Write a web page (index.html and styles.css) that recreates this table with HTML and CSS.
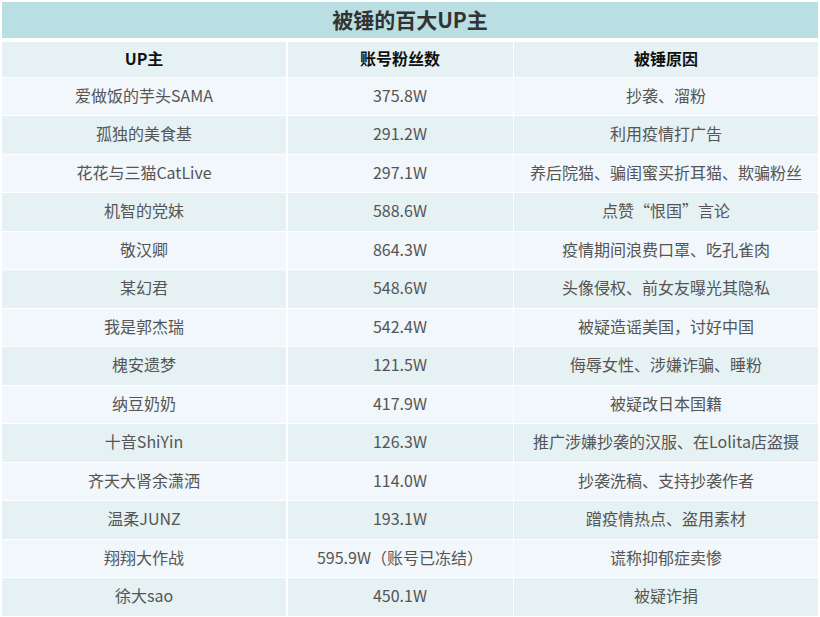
FILE: index.html
```html
<!DOCTYPE html>
<html lang="zh-CN">
<head>
<meta charset="utf-8">
<title>被锤的百大UP主</title>
<link rel="stylesheet" href="styles.css">
</head>
<body>
<div class="wrap">
  <div class="title">被锤的百大UP主</div>
  <div class="grid">
    <div class="cell head">UP主</div><div class="cell head">账号粉丝数</div><div class="cell head">被锤原因</div>
    <div class="cell light">爱做饭的芋头SAMA</div><div class="cell light">375.8W</div><div class="cell light">抄袭、溜粉</div>
    <div class="cell dark">孤独的美食基</div><div class="cell dark">291.2W</div><div class="cell dark">利用疫情打广告</div>
    <div class="cell light">花花与三猫CatLive</div><div class="cell light">297.1W</div><div class="cell light">养后院猫、骗闺蜜买折耳猫、欺骗粉丝</div>
    <div class="cell dark">机智的党妹</div><div class="cell dark">588.6W</div><div class="cell dark">点赞“恨国”言论</div>
    <div class="cell light">敬汉卿</div><div class="cell light">864.3W</div><div class="cell light">疫情期间浪费口罩、吃孔雀肉</div>
    <div class="cell dark">某幻君</div><div class="cell dark">548.6W</div><div class="cell dark">头像侵权、前女友曝光其隐私</div>
    <div class="cell light">我是郭杰瑞</div><div class="cell light">542.4W</div><div class="cell light">被疑造谣美国，讨好中国</div>
    <div class="cell dark">槐安遗梦</div><div class="cell dark">121.5W</div><div class="cell dark">侮辱女性、涉嫌诈骗、睡粉</div>
    <div class="cell light">纳豆奶奶</div><div class="cell light">417.9W</div><div class="cell light">被疑改日本国籍</div>
    <div class="cell dark">十音ShiYin</div><div class="cell dark">126.3W</div><div class="cell dark">推广涉嫌抄袭的汉服、在Lolita店盗摄</div>
    <div class="cell light">齐天大肾余潇洒</div><div class="cell light">114.0W</div><div class="cell light">抄袭洗稿、支持抄袭作者</div>
    <div class="cell dark">温柔JUNZ</div><div class="cell dark">193.1W</div><div class="cell dark">蹭疫情热点、盗用素材</div>
    <div class="cell light">翔翔大作战</div><div class="cell light">595.9W（账号已冻结）</div><div class="cell light">谎称抑郁症卖惨</div>
    <div class="cell dark">徐大sao</div><div class="cell dark">450.1W</div><div class="cell dark">被疑诈捐</div>
  </div>
</div>
</body>
</html>
```

FILE: styles.css
```css
html, body {
  margin: 0;
  padding: 0;
  background: #ffffff;
}
body {
  font-family: "Noto Sans CJK SC", "Open Sans", sans-serif;
}
.wrap {
  padding: 2px 2px 0 2px;
  width: 816px;
}
.title {
  height: 35.5px;
  background: #b9dfe2;
  color: #333333;
  font-size: 21px;
  font-weight: bold;
  display: flex;
  align-items: center;
  justify-content: center;
  margin-bottom: 4px;
  padding-bottom: 2px;
  box-sizing: border-box;
}
.grid {
  display: grid;
  grid-template-columns: 284px 225px 1fr;
  grid-template-rows: 35px repeat(14, 37.5px);
  column-gap: 1.5px;
  row-gap: 1px;
}
.cell {
  display: flex;
  align-items: center;
  justify-content: center;
  font-size: 16px;
  line-height: 20px;
  padding-bottom: 3px;
  box-sizing: border-box;
  color: #555555;
  white-space: nowrap;
}
.head {
  background: #e5f1f3;
  color: #111111;
  font-weight: bold;
  padding-bottom: 2px;
}
.dark {
  background: #e5f1f3;
}
.light {
  background: #f1f7fa;
}
```
